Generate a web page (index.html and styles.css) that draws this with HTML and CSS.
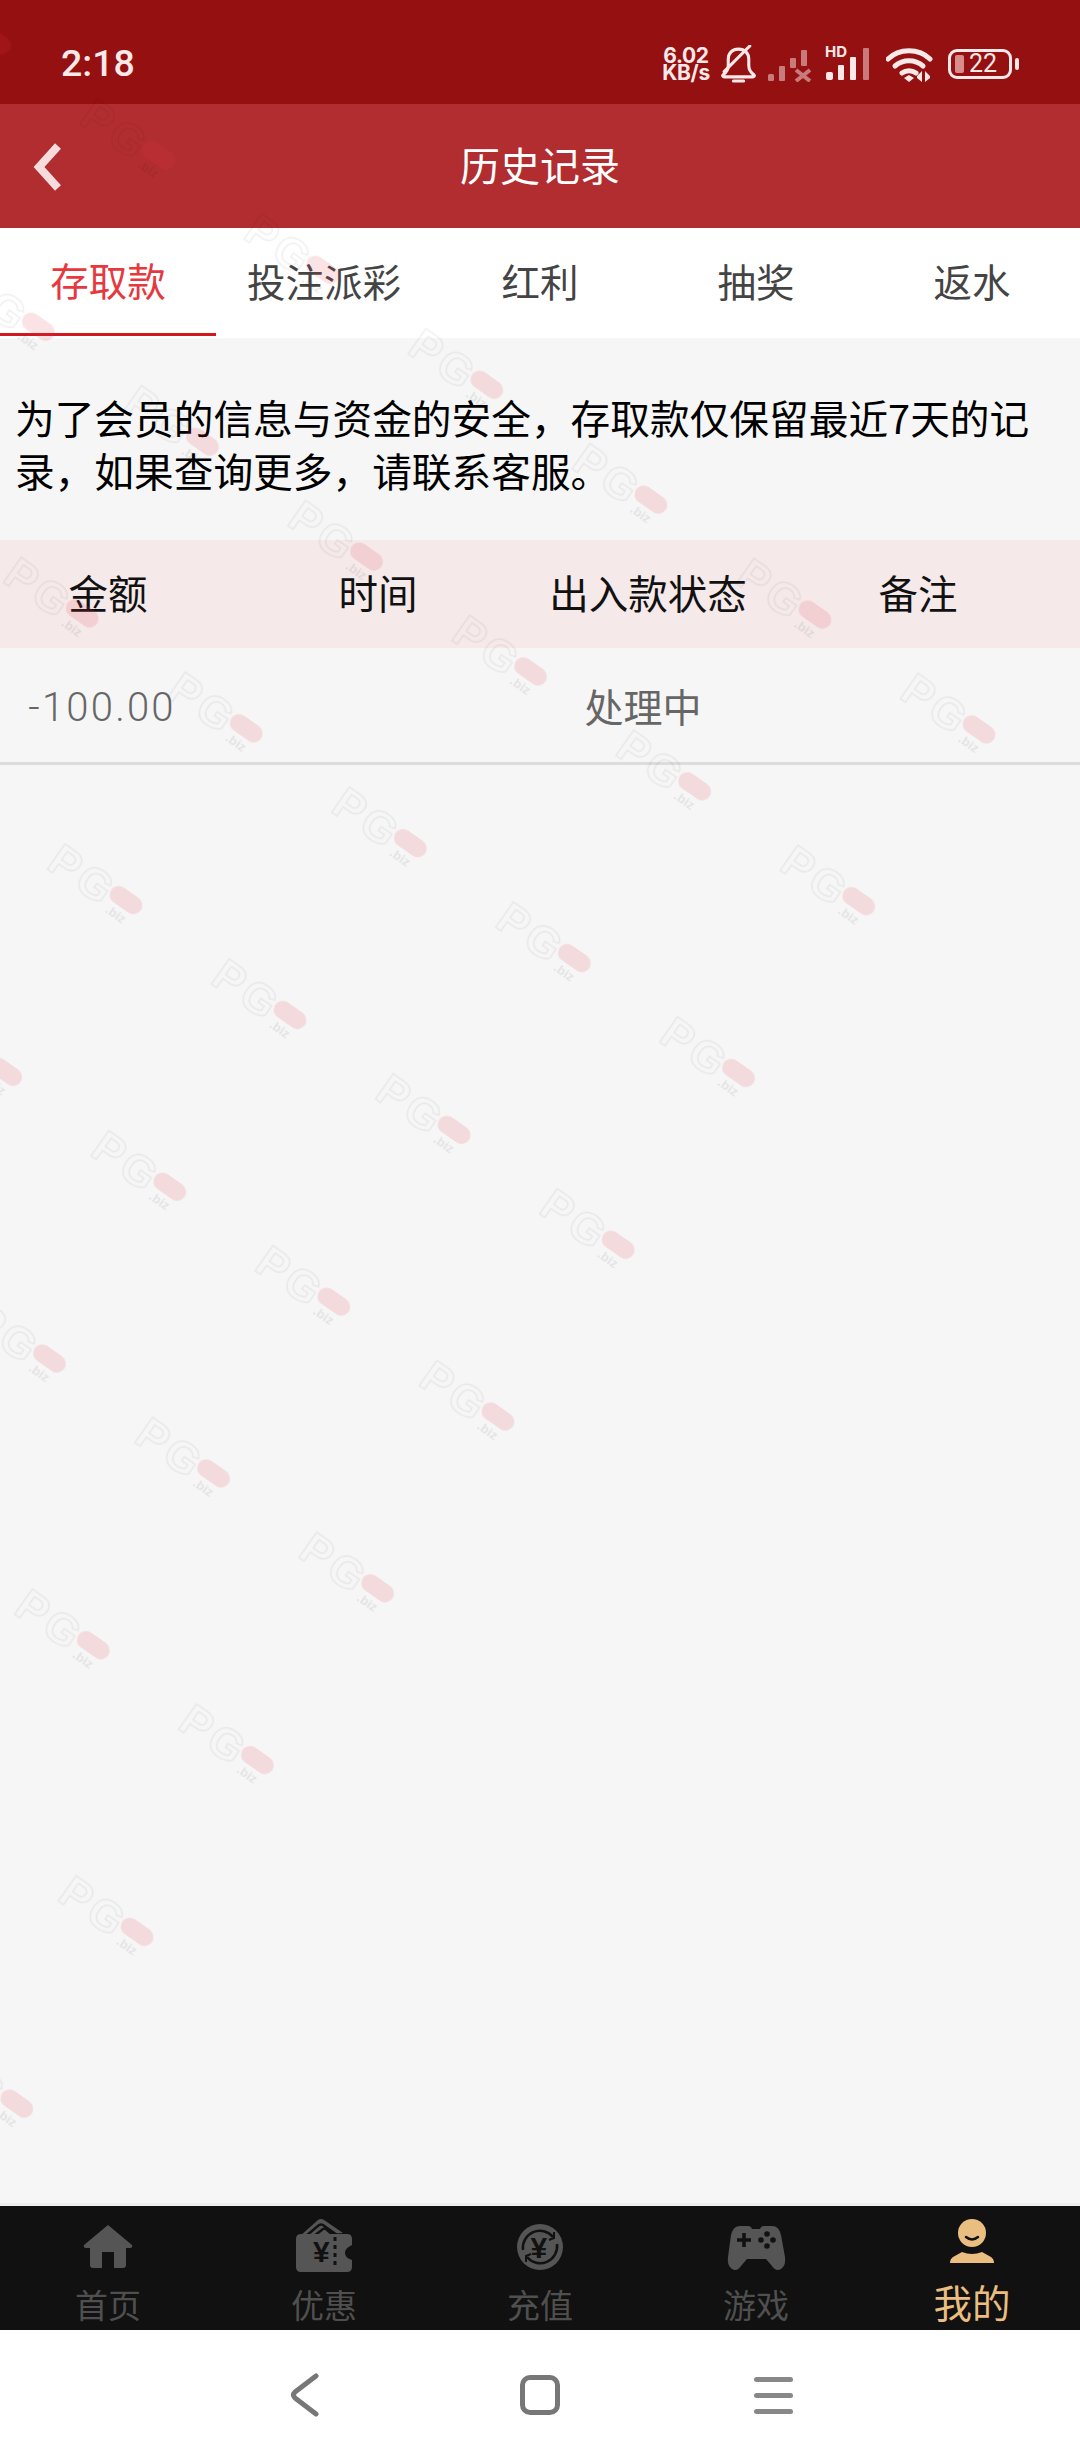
FILE: index.html
```html
<!DOCTYPE html>
<html lang="zh-CN">
<head>
<meta charset="utf-8">
<title>历史记录</title>
<link rel="stylesheet" href="styles.css">
</head>
<body>
<div class="page">
  <div class="status">
    <span class="time">2:18</span>
    <div class="status-icons">
      <div class="speed">6.02<br>KB/s</div>
      <svg class="ic-bell" width="36" height="38" viewBox="1 0 33 37"><path class="st" d="M3 29c3-2 5-4 5-9v-6c0-6 4-10 10-10s10 4 10 10v6c0 5 2 7 5 9 1 1 0 2-1 2H4c-1 0-2-1-1-2z"/><path class="st" d="M13 35h10"/><path class="st" d="M4 26 29 1"/></svg>
      <svg class="ic-sig" width="48" height="34" viewBox="0 0 48 34"><g class="dim"><rect x="0" y="26" width="6" height="7" rx="1.5"/><rect x="11" y="18" width="6" height="15" rx="1"/><rect x="22" y="10" width="6" height="10" rx="1"/><rect x="33" y="2" width="6" height="16" rx="1"/><path class="dimst" d="m28 22 14 11m0-11L28 33"/></g></svg>
      <div class="hd-wrap">
        <span class="hd">HD</span>
        <svg width="48" height="32" viewBox="0 0 48 32"><rect class="bright" x="0" y="24" width="7" height="8" rx="2"/><rect class="bright" x="12" y="17" width="6" height="15" rx="1"/><rect class="bright" x="24" y="9" width="6" height="23" rx="1"/><rect class="half" x="37" y="0" width="6" height="32" rx="1"/></svg>
      </div>
      <svg class="ic-wifi" width="48" height="36" viewBox="0 0 48 36"><path class="wf" d="M2 13C13 2 33 2 44 13"/><path class="wf" d="M9 20c8-7 20-7 28 0"/><path class="wf" d="M16 27c4-3 10-3 14 0"/><path class="bright" d="m23 29 5 3-5 4-5-4z"/><path class="bright" d="M36 25v11l-5-4v-2zM39 25l5 5v2l-5 4z"/></svg>
      <div class="battery">
        <div class="batt-body"><span class="batt-level"></span><span class="batt-num">22</span></div>
        <span class="batt-tip"></span>
      </div>
    </div>
  </div>

  <header class="topbar">
    <svg class="back" width="32" height="48" viewBox="0 0 32 48"><path d="M26 3 7 24l19 21"/></svg>
    <h1 class="title">历史记录</h1>
  </header>

  <nav class="tabs">
    <a class="tab active">存取款</a>
    <a class="tab">投注派彩</a>
    <a class="tab">红利</a>
    <a class="tab">抽奖</a>
    <a class="tab">返水</a>
  </nav>

  <main class="content">
    <p class="notice">为了会员的信息与资金的安全，存取款仅保留最近7天的记录，如果查询更多，请联系客服。</p>
    <div class="thead">
      <span class="c1">金额</span><span class="c2">时间</span><span class="c3">出入款状态</span><span class="c4">备注</span>
    </div>
    <div class="trow">
      <span class="c1 amount">-100.00</span><span class="c2"></span><span class="c3">处理中</span><span class="c4"></span>
    </div>
  </main>

  <nav class="dock">
    <a class="dock-item">
      <svg class="dock-ic" width="60" height="53" viewBox="0 0 60 53"><path d="M30 6 54 26q1 3-2 3h-4v17q0 3-3 3h-9V33H24v16h-9q-3 0-3-3V29H8q-3 0-2-3z"/></svg>
      <span>首页</span>
    </a>
    <a class="dock-item">
      <svg class="dock-ic" width="60" height="53" viewBox="0 0 60 53">
        <path d="M6 17 24 1q3-2 6 0l19 13z"/>
        <path class="cut" d="M12 17 25 6q2-1 4 0l14 10M20 17l9-7q2-1 3 0l8 7"/>
        <path d="M2 20q0-5 5-5h46q5 0 5 5v6q-7 3-7 8t7 7v7q0 5-5 5H7q-5 0-5-5z"/>
        <path class="dots" d="M41 18v32"/>
        <text class="yen" x="19" y="43">¥</text>
      </svg>
      <span>优惠</span>
    </a>
    <a class="dock-item">
      <svg class="dock-ic" width="60" height="53" viewBox="0 0 60 53">
        <circle cx="30" cy="28" r="23"/>
        <path class="cut" d="M13 31a17 17 0 0 1 30-13M47 25a17 17 0 0 1-30 13"/>
        <path class="cut thin" d="m39 21 5-2 0-6M21 35l-5 2 0 6"/>
        <text class="yen" x="20.500" y="39">¥</text>
      </svg>
      <span>充值</span>
    </a>
    <a class="dock-item">
      <svg class="dock-ic" width="60" height="53" viewBox="0 0 60 53">
        <path d="M14 7h8q3 0 4 3h8q1-3 4-3h8q7 0 9 9l4 22q1 9-4 12-5 3-9-3l-6-7H21l-6 7q-4 6-9 3-5-3-4-12l3-22q2-9 9-9z"/>
        <path class="cut plus" d="M18 14v14M11 21h14"/>
        <circle class="hole" cx="41" cy="15" r="2.800"/><circle class="hole" cx="41" cy="27" r="2.800"/><circle class="hole" cx="35" cy="21" r="2.800"/><circle class="hole" cx="47" cy="21" r="2.800"/>
      </svg>
      <span>游戏</span>
    </a>
    <a class="dock-item on">
      <svg class="dock-ic" width="60" height="53" viewBox="0 0 60 53">
        <circle cx="30" cy="14" r="14"/>
        <path d="M8 44q0-4 3-6l9-5q10 4 20 0l9 5q3 2 3 6z"/>
        <path class="smile" d="M24 18q6 5 12 0"/>
      </svg>
      <span>我的</span>
    </a>
  </nav>

  <footer class="sysnav">
    <svg class="sys-back" width="30" height="44" viewBox="0 0 30 44"><path d="M26 3 5 19q-3 3 0 6l21 16"/></svg>
    <span class="sys-home"></span>
    <div class="sys-menu"><i></i><i></i><i></i></div>
  </footer>

  <svg class="watermark" width="1080" height="2203" aria-hidden="true">
    <defs>
      <pattern id="wm" patternUnits="userSpaceOnUse" width="200.300" height="209.700">
        <g transform="translate(110 40)">
          <text class="wm-pg" x="-85" y="20">PG</text>
          <rect class="wm-pill" x="-18" y="-9" width="36" height="18" rx="9"/>
          <text class="wm-biz" x="-11" y="22">.biz</text>
        </g>
      </pattern>
    </defs>
    <g transform="translate(222.900 919.100) rotate(35)">
      <rect x="-2002.999" y="-629.100" width="2603.899" height="2700" fill="url(#wm)"/>
    </g>
  </svg>
</div>
</body>
</html>
```
FILE: styles.css
```css
* { box-sizing: border-box; }
html, body { margin: 0; padding: 0; }
body { font-family: "Noto Sans CJK SC", "Noto Sans", sans-serif; background: #fff; }
.page { position: relative; width: 1080px; height: 2460px; display: flex; flex-direction: column; overflow: hidden; }

/* status bar */
.status { height: 104px; flex: none; background: #951010; display: flex; align-items: center; padding: 24px 0 0 61px; color: #fbe9e9; }
.time { font-family: Roboto, sans-serif; font-size: 37.500px; font-weight: 500; line-height: 44px; margin-top: -2px; }
.status-icons { margin-left: auto; display: flex; align-items: center; padding-right: 61px; margin-top: -1px; }
.speed { font-family: Inter, sans-serif; font-weight: 700; font-size: 21px; line-height: 17px; width: 50px; text-align: center; margin-right: 9px; letter-spacing: -0.3px; white-space: nowrap; }
.ic-bell { margin-right: 12px; }
.st { fill: none; stroke: #fbe9e9; stroke-width: 3; stroke-linecap: round; stroke-linejoin: round; }
.ic-sig { margin-right: 10px; margin-top: 2px; }
.dim rect { fill: #c97b7b; }
.dimst { fill: none; stroke: #c97b7b; stroke-width: 4; }
.hd-wrap { position: relative; width: 48px; height: 34px; margin-right: 12px; margin-top: 2px; }
.hd { position: absolute; left: -1px; top: -4px; font-family: Inter, sans-serif; font-size: 15px; line-height: 16px; font-weight: 700; }
.bright { fill: #fbe9e9; }
.half { fill: #c97b7b; }
.wf { fill: none; stroke: #fbe9e9; stroke-width: 5; stroke-linecap: round; }
.ic-wifi { margin-right: 14px; }
.battery { display: flex; align-items: center; gap: 3px; }
.batt-body { width: 64px; height: 30px; border: 3px solid #fbe9e9; border-radius: 9px; display: flex; align-items: center; padding-left: 4px; }
.batt-level { width: 9px; height: 18px; background: #d98c8c; border-radius: 2px; }
.batt-num { font-family: Roboto, sans-serif; font-size: 25px; line-height: 24px; margin-left: 5px; }
.batt-tip { width: 4px; height: 12px; background: #fbe9e9; border-radius: 2px; }

/* title bar */
.topbar { height: 124px; flex: none; background: #b22d30; display: flex; align-items: center; justify-content: center; position: relative; }
.back { position: absolute; left: 32px; top: 39px; }
.back path { fill: none; stroke: #f6dcdc; stroke-width: 8; }
.title { margin: 0; color: #fff; font-size: 40px; font-weight: 400; line-height: 56px; margin-top: -5px; }

/* tabs */
.tabs { height: 110px; flex: none; background: #fff; display: flex; }
.tab { flex: 1; display: flex; align-items: center; justify-content: center; font-size: 38.500px; color: #444; padding-bottom: 6px; }
.tab.active { color: #e5383f; border-bottom: 3px solid #d3171d; height: 108px; padding-bottom: 3px; }

/* content */
.content { flex: 1; background: #f6f6f6; }
.notice { margin: 0; padding: 52px 15px 0; height: 202px; font-size: 39.700px; line-height: 53px; color: #000; }
.thead, .trow { display: flex; align-items: center; text-align: center; }
.thead { height: 108px; background: #f5e9e9; color: #111; font-size: 39.500px; padding-bottom: 5px; }
.trow { height: 117px; border-bottom: 3px solid #dcdcdc; color: #666; font-size: 38px; }
.c1, .c3 { width: 216px; flex: none; }
.c2, .c4 { width: 324px; flex: none; }
.trow .c3 { margin-left: -5px; margin-right: 5px; font-size: 39px; }
.amount { font-family: Roboto, sans-serif; font-weight: 300; font-size: 40px; letter-spacing: 2.200px; margin-left: -6px; margin-right: 6px; padding-top: 5px; }

/* dock */
.dock { height: 127px; flex: none; background: #111; border-top: 3px solid #eeeeee; display: flex; }
.dock-item { width: 216px; display: flex; flex-direction: column; align-items: center; padding-top: 13px; color: #4f4f4f; font-size: 33px; line-height: 40px; }
.dock-ic { display: block; margin-bottom: 12px; fill: #555; }
.cut { fill: none; stroke: #111; stroke-width: 2.500; }
.cut.thin { stroke-width: 2; }
.cut.plus { stroke-width: 3.500; }
.hole { fill: #111; }
.dots { fill: none; stroke: #111; stroke-width: 3; stroke-dasharray: 4 4; }
.yen { fill: #111; font-family: "Liberation Sans", sans-serif; font-size: 30px; font-weight: 700; }
.on { color: #e9be80; font-size: 38.500px; }
.on .dock-ic { fill: #e9be80; margin-bottom: 9px; }
.smile { fill: none; stroke: #111; stroke-width: 2.500; stroke-linecap: round; }

/* system navigation */
.sysnav { height: 130px; flex: none; background: #fff; display: flex; align-items: center; padding-left: 290px; }
.sys-back { display: block; }
.sys-back path { fill: none; stroke: #777; stroke-width: 5; stroke-linecap: round; stroke-linejoin: round; }
.sys-home { margin-left: 200px; width: 40px; height: 40px; border: 5px solid #777; border-radius: 10px; }
.sys-menu { margin-left: 194px; width: 39px; display: flex; flex-direction: column; gap: 11px; }
.sys-menu i { display: block; height: 5px; border-radius: 3px; background: #888; }

/* repeated watermark laid over the screen */
.watermark { position: absolute; left: 0; top: 0; pointer-events: none; }
.wm-pg { font-family: "Liberation Sans", sans-serif; font-size: 44px; font-weight: 700; fill: none; stroke: rgba(0,0,0,.06); stroke-width: 1.500; letter-spacing: 4px; }
.wm-pill { fill: rgba(225,50,70,.14); }
.wm-biz { font-family: "Liberation Sans", sans-serif; font-size: 13px; font-weight: 700; fill: rgba(0,0,0,.08); }
```
